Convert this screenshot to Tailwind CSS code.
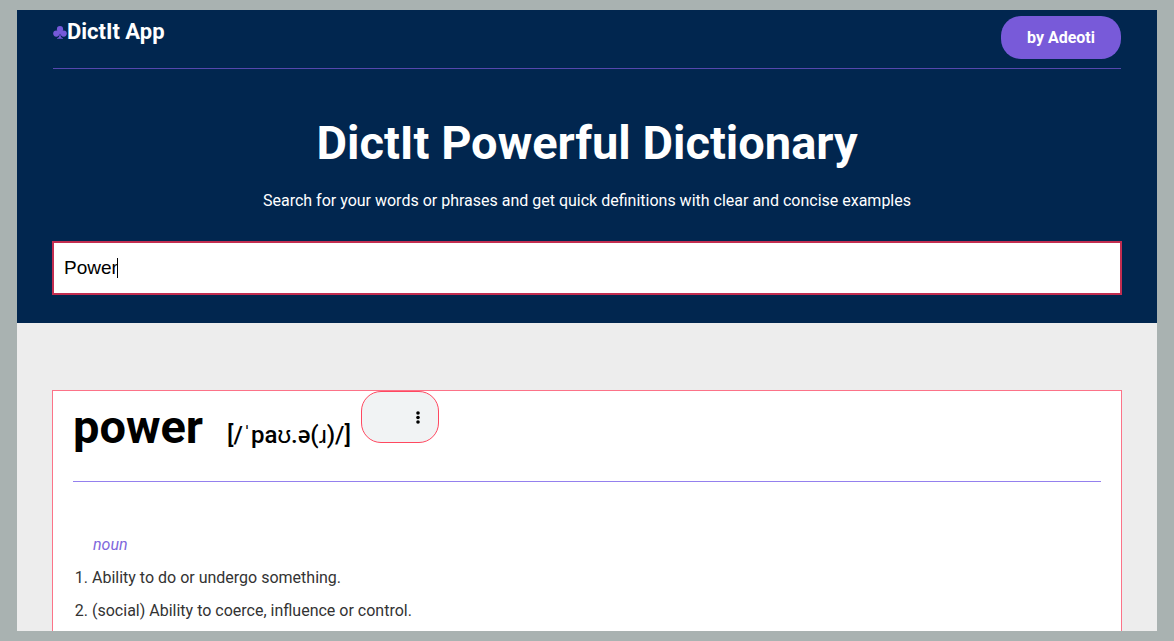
<!DOCTYPE html>
<html lang="en">
<head>
<meta charset="utf-8">
<meta name="viewport" content="width=device-width, initial-scale=1">
<title>DictIt App</title>
<script src="https://cdn.jsdelivr.net/npm/@tailwindcss/browser@4"></script>
</head>
<body class="h-screen overflow-hidden bg-[#a9b2b1] px-[17px] py-[10px] font-['Roboto',sans-serif] text-base">
<div class="h-full overflow-hidden bg-[#ededed]">
  <header class="bg-[#01264f] px-9 pb-7 text-white">
    <nav class="flex items-start justify-between border-b border-[#5547ae] pt-1.5 pb-[9px]">
      <a href="#" class="flex items-center text-[22px] leading-8 font-bold"><svg class="h-[13px] w-[14px]" viewBox="0 0 14 13" fill="#7559d9" aria-hidden="true"><circle cx="7" cy="3.2" r="3.1"/><circle cx="3.3" cy="7.6" r="3.1"/><circle cx="10.7" cy="7.6" r="3.1"/><path d="M6 4h2v3.500h1L7.500 8c0 2.500.8 3.800 2.500 4.200v.6H4v-.6c1.700-.4 2.500-1.700 2.500-4.200L5 7.500h1z"/></svg>DictIt App</a>
      <button type="button" class="h-[43px] rounded-[20px] bg-[#785ad9] px-[26px] text-base font-bold">by Adeoti</button>
    </nav>
    <h1 class="mt-[46px] text-center text-[47px] leading-14 font-bold">DictIt Powerful Dictionary</h1>
    <p class="mt-[18px] text-center leading-6">Search for your words or phrases and get quick definitions with clear and concise examples</p>
    <div class="relative -mx-px mt-7">
      <input type="text" value="Power" aria-label="Search for a word" class="block h-[54px] w-full border-2 border-[#c22d50] bg-white px-[10px] font-['Liberation_Sans',sans-serif] text-[19px] text-black outline-none">
      <span class="absolute top-[17px] left-[65px] h-5 w-px bg-black" aria-hidden="true"></span>
    </div>
  </header>
  <main class="px-[35px] pt-[67px]">
    <article class="min-h-screen border border-[#fc7388] bg-white px-5 text-black">
      <div class="flex h-[91px] items-start border-b border-[#9480ee]">
        <h2 class="flex items-baseline text-[47px] leading-[72px] font-bold">power <span class="ml-6 text-[24px] font-medium">[/ˈpaʊ.ə(ɹ)/]</span></h2>
        <button type="button" aria-label="Audio options" class="ml-2.5 flex h-[52px] w-[78px] items-center justify-end rounded-[20px] border border-[#ff4860] bg-[#f1f3f4] pr-[18px]"><svg class="h-[13px] w-1" viewBox="0 0 4 13" fill="#000" aria-hidden="true"><circle cx="2" cy="2" r="1.800"/><circle cx="2" cy="6.500" r="1.800"/><circle cx="2" cy="11" r="1.800"/></svg></button>
      </div>
      <p class="mt-[51px] pl-5 leading-6 text-[#8068dc] italic">noun</p>
      <ol class="mt-1 list-decimal pl-[19px] leading-[33px] text-[#333]">
        <li>Ability to do or undergo something.</li>
        <li>(social) Ability to coerce, influence or control.</li>
      </ol>
    </article>
  </main>
</div>
</body>
</html>
